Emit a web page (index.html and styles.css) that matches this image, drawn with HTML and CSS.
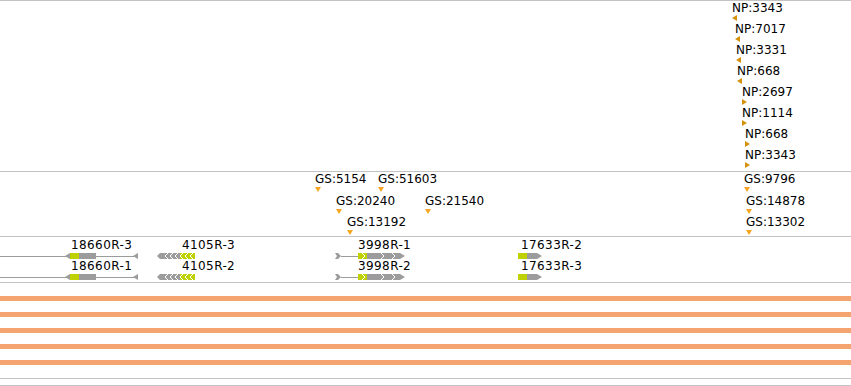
FILE: index.html
```html
<!DOCTYPE html>
<html lang="en">

<head>
    <meta charset="UTF-8">
    <meta name="viewport" content="width=device-width, initial-scale=1.0">
    <title>Track view</title>
    <link rel="stylesheet" href="styles.css">
</head>

<body>
    <div class="browser">
        <div class="track track-np" id="track-np"></div>
        <div class="track track-gs" id="track-gs"></div>
        <div class="track track-genes" id="track-genes"></div>
        <div class="track track-coverage">
            <div class="cov-bar"></div>
            <div class="cov-bar"></div>
            <div class="cov-bar"></div>
            <div class="cov-bar"></div>
            <div class="cov-bar"></div>
        </div>
        <div class="track track-empty"></div>
    </div>

    <!-- gene models, drawn once and reused for each transcript row -->
    <svg class="defs" width="0" height="0">
        <defs>
            <g id="gene-models">
                <!-- 18660R -->
                <rect class="intron" x="0" y="4" width="135" height="1" />
                <polygon class="exon" points="65,4 70,1 70,7" />
                <rect class="cds" x="70" y="1" width="9" height="6" />
                <rect class="exon" x="79" y="1" width="17" height="6" />
                <polygon class="exon" points="133,4 138,1 138,7" />

                <!-- 4105R -->
                <polygon class="exon" points="157,4 160,1 160,7" />
                <rect class="exon" x="160" y="1" width="20" height="6" />
                <rect class="cds" x="180" y="1" width="15" height="6" />
                <polyline class="notch" points="168,1 165,4 168,7" />
                <polyline class="notch" points="173,1 170,4 173,7" />
                <polyline class="notch" points="178,1 175,4 178,7" />
                <polyline class="notch" points="183,1 180,4 183,7" />
                <polyline class="notch" points="188,1 185,4 188,7" />
                <polyline class="notch" points="193,1 190,4 193,7" />

                <!-- 3998R -->
                <polygon class="exon" points="335,1 338,1 341,4 338,7 335,7 337,4" />
                <rect class="intron" x="341" y="4" width="17" height="1" />
                <rect class="cds" x="358" y="1" width="9" height="6" />
                <polyline class="notch" points="362,1 365,4 362,7" />
                <rect class="exon" x="367" y="1" width="33" height="6" />
                <polygon class="exon" points="400,1 405,4 400,7" />
                <polyline class="notch" points="381,1 384,4 381,7" />
                <polyline class="notch" points="392,1 395,4 392,7" />

                <!-- 17633R -->
                <rect class="cds" x="518" y="1" width="9" height="6" />
                <rect class="exon" x="527" y="1" width="10" height="6" />
                <polygon class="exon" points="537,1 542,4 537,7" />
            </g>
        </defs>
    </svg>

    <script>
        const SVG_NS = 'http://www.w3.org/2000/svg';

        const npFeatures = [
            { name: 'NP:3343', start: 732, row: 0, strand: -1 },
            { name: 'NP:7017', start: 735, row: 1, strand: -1 },
            { name: 'NP:3331', start: 736, row: 2, strand: -1 },
            { name: 'NP:668', start: 737, row: 3, strand: -1 },
            { name: 'NP:2697', start: 742, row: 4, strand: 1 },
            { name: 'NP:1114', start: 742, row: 5, strand: 1 },
            { name: 'NP:668', start: 745, row: 6, strand: 1 },
            { name: 'NP:3343', start: 745, row: 7, strand: 1 }
        ];

        const gsFeatures = [
            { name: 'GS:5154', start: 315, row: 0 },
            { name: 'GS:51603', start: 378, row: 0 },
            { name: 'GS:20240', start: 336, row: 1 },
            { name: 'GS:21540', start: 425, row: 1 },
            { name: 'GS:13192', start: 347, row: 2 },
            { name: 'GS:9796', start: 744, row: 0 },
            { name: 'GS:14878', start: 746, row: 1 },
            { name: 'GS:13302', start: 746, row: 2 }
        ];

        const transcriptRows = [
            [['18660R-3', 71], ['4105R-3', 182], ['3998R-1', 358], ['17633R-2', 521]],
            [['18660R-1', 71], ['4105R-2', 182], ['3998R-2', 358], ['17633R-3', 521]]
        ];

        function marker(points, cls) {
            const svg = document.createElementNS(SVG_NS, 'svg');
            svg.setAttribute('width', '6');
            svg.setAttribute('height', '6');
            const shape = document.createElementNS(SVG_NS, 'polygon');
            shape.setAttribute('points', points);
            shape.setAttribute('class', cls);
            svg.appendChild(shape);
            return svg;
        }

        function addFeature(track, name, left, top, glyph) {
            const el = document.createElement('div');
            el.className = 'feature';
            el.style.left = left + 'px';
            el.style.top = top + 'px';
            const label = document.createElement('span');
            label.textContent = name;
            el.appendChild(label);
            el.appendChild(glyph);
            track.appendChild(el);
        }

        const npTrack = document.getElementById('track-np');
        npFeatures.forEach(f => {
            const points = f.strand < 0 ? '0,3 5,0 5,6' : '0,0 5,3 0,6';
            addFeature(npTrack, f.name, f.start, 1 + f.row * 21, marker(points, 'np-mark'));
        });

        const gsTrack = document.getElementById('track-gs');
        gsFeatures.forEach(f => {
            addFeature(gsTrack, f.name, f.start, 1 + Math.round(f.row * 21.5), marker('0,0 6,0 3,5', 'gs-mark'));
        });

        const geneTrack = document.getElementById('track-genes');
        transcriptRows.forEach(labels => {
            const row = document.createElement('div');
            row.className = 'gene-row';
            labels.forEach(([name, x]) => {
                const label = document.createElement('span');
                label.className = 'gene-label';
                label.textContent = name;
                label.style.left = x + 'px';
                row.appendChild(label);
            });
            const svg = document.createElementNS(SVG_NS, 'svg');
            svg.setAttribute('width', '851');
            svg.setAttribute('height', '7');
            const use = document.createElementNS(SVG_NS, 'use');
            use.setAttribute('href', '#gene-models');
            svg.appendChild(use);
            row.appendChild(svg);
            geneTrack.appendChild(row);
        });
    </script>
</body>

</html>
```

FILE: styles.css
```css
:root {
    --rule-color: #c3c3c3;
    --exon-color: #9c9c9c;
    --cds-color: #bfd200;
    --np-color: #d4920c;
    --gs-color: #f5a623;
    --coverage-color: #f4a46e;
}

* {
    margin: 0;
    padding: 0;
}

body {
    font-family: 'DejaVu Sans', Verdana, sans-serif;
    font-size: 12px;
    color: #000;
    background: #fff;
    overflow: hidden;
}

.browser {
    width: 851px;
}

.track {
    position: relative;
    border-top: 1px solid var(--rule-color);
}

.track-np {
    height: 170px;
}

.track-gs {
    height: 64px;
}

.track-genes {
    height: 45px;
}

.track-coverage {
    height: 82px;
    padding-top: 13px;
    display: flex;
    flex-direction: column;
    gap: 11px;
}

.track-empty {
    height: 6px;
    border-bottom: 1px solid var(--rule-color);
}

.feature {
    position: absolute;
    display: flex;
    flex-direction: column;
    align-items: flex-start;
    line-height: 13px;
    white-space: nowrap;
}

.feature svg {
    display: block;
}

.track-gs .feature svg {
    margin-top: 1px;
}

.np-mark {
    fill: var(--np-color);
}

.gs-mark {
    fill: var(--gs-color);
}

.gene-row {
    position: relative;
    height: 6px;
    padding-top: 15px;
}

.gene-row svg {
    display: block;
    overflow: visible;
}

.gene-label {
    position: absolute;
    top: 2px;
    line-height: 13px;
    letter-spacing: 0.4px;
    white-space: nowrap;
}

.intron {
    fill: var(--exon-color);
}

.exon {
    fill: var(--exon-color);
}

.cds {
    fill: var(--cds-color);
}

.notch {
    fill: none;
    stroke: #fff;
    stroke-width: 1;
}

.cov-bar {
    height: 5px;
    background: var(--coverage-color);
}

.defs {
    display: block;
}
```
